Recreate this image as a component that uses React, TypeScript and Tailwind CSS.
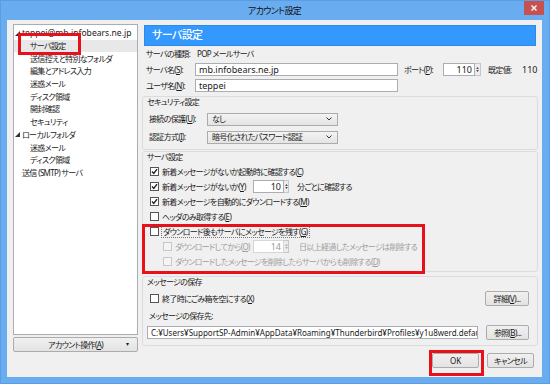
import React from "react";

const base = "font-['Noto_Sans','Noto_Sans_CJK_JP',sans-serif] [font-feature-settings:'palt'] text-[8px] tracking-[-0.65px] whitespace-nowrap text-[#1a1a1a]";
const latin = "text-[9px] tracking-normal";

function Check({ checked = false, disabled = false }: { checked?: boolean; disabled?: boolean }) {
    return <span className={`w-[9px] h-[9px] shrink-0 border flex items-center justify-center ${disabled ? "border-[#c8c8c8] bg-[#f4f4f4]" : "border-[#555] bg-white"}`}>
        {checked && <svg width="7" height="7" viewBox="0 0 7 7">
            <polyline points="1,3.6 2.8,5.5 6,1.2" fill="none" stroke="#222" strokeWidth="1.4" />
        </svg>}
    </span>;
}

function Spin({ value, disabled = false, wide = false }: { value: string; disabled?: boolean; wide?: boolean }) {
    return <div className="flex items-center h-[13px] shrink-0">
        <div className={`${wide ? "w-[32px]" : "w-[31px]"} h-full border bg-white text-right pr-[2px] leading-[11px] ${latin} ${disabled ? "border-[#d6d6d6] text-[#9a9a9a]" : "border-[#abadb3]"}`}>{value}</div>
        <div className={`${wide ? "w-[6px]" : "w-[5px]"} h-full flex flex-col items-center justify-center gap-[1px] border border-l-0 border-[#c6c6c6] bg-[#ececec]`}>
            <svg width="3" height="2" viewBox="0 0 4 3"><polygon points="0,3 2,0 4,3" fill={disabled ? "#aaa" : "#444"} /></svg>
            <svg width="3" height="2" viewBox="0 0 4 3"><polygon points="0,0 4,0 2,3" fill={disabled ? "#aaa" : "#444"} /></svg>
        </div>
    </div>;
}

function Select({ text }: { text: string }) {
    return <div className="w-[131px] h-[13px] border border-[#acacac] bg-gradient-to-b from-[#f3f3f3] to-[#e4e4e4] flex items-center justify-between pl-[4px] pr-[5px]">
        <span>{text}</span>
        <svg width="6" height="4" viewBox="0 0 6 4"><polyline points="0.5,0.5 3,3 5.5,0.5" fill="none" stroke="#333" strokeWidth="1" /></svg>
    </div>;
}

function Button({ children, className = "" }: { children: React.ReactNode; className?: string }) {
    return <div className={`h-[15px] border border-[#acacac] rounded-[2px] bg-gradient-to-b from-[#f0f0f0] to-[#e3e3e3] flex items-center justify-center ${className}`}>{children}</div>;
}

function Group({ title, children, className = "" }: { title: string; children: React.ReactNode; className?: string }) {
    return <div className={`border border-[#dcdcdc] rounded-[3px] ${className}`}>
        <div className="h-[10px] leading-[10px] pl-[4px]">{title}</div>
        {children}
    </div>;
}

const tree: { label: string; indent: number; arrow?: boolean; selected?: boolean }[] = [
    { label: "teppei@mb.infobears.ne.jp", indent: 0, arrow: true },
    { label: "サーバ設定", indent: 1, selected: true },
    { label: "送信控えと特別なフォルダ", indent: 1 },
    { label: "編集とアドレス入力", indent: 1 },
    { label: "迷惑メール", indent: 1 },
    { label: "ディスク領域", indent: 1 },
    { label: "開封確認", indent: 1 },
    { label: "セキュリティ", indent: 1 },
    { label: "ローカルフォルダ", indent: 0, arrow: true },
    { label: "迷惑メール", indent: 1 },
    { label: "ディスク領域", indent: 1 },
    { label: "送信 (SMTP) サーバ", indent: 2 },
];

export default function App() {
    return <div className={`relative w-[550px] h-[384px] bg-[#6aacf0] border border-[#5b9de2] flex flex-col pl-[6px] pr-[7px] pb-[6px] ${base}`}>
        {/* title bar */}
        <div className="h-[19px] flex items-center justify-center text-[9px] text-[#111]">アカウント設定</div>
        <div className="absolute right-[5px] top-0 w-[20px] h-[14px] bg-[#c75050] flex items-center justify-center">
            <svg width="6" height="6" viewBox="0 0 6 6"><path d="M0.5 0.5 L5.5 5.5 M5.5 0.5 L0.5 5.5" stroke="#fff" strokeWidth="1.4" /></svg>
        </div>

        {/* client */}
        <div className="flex-1 bg-[#f0f0f0] flex">
            {/* left column */}
            <div className="ml-[6px] pt-[4px] w-[125px] flex flex-col">
                <div className="h-[311px] border border-[#abadb3] bg-white pt-[2px] overflow-hidden">
                    {tree.map((t, i) =>
                        <div key={i} className={`h-[12.7px] flex items-center ${t.selected ? "bg-[#e8e8e8]" : ""} ${t.indent === 1 ? "pl-[16px]" : t.indent === 2 ? "pl-[8px]" : "pl-[1px]"}`}>
                            {t.arrow && <svg className="mr-[2px] shrink-0" width="5" height="5" viewBox="0 0 5 5"><polygon points="5,0 5,5 0,5" fill="#333" /></svg>}
                            <span className={i === 0 ? "text-[8.6px] tracking-normal" : ""}>{t.label}</span>
                        </div>
                    )}
                </div>
                <Button className="mt-[2px] relative">
                    <span>アカウント操作(<u>A</u>)</span>
                    <span className="absolute right-[9px] text-[6px]">▾</span>
                </Button>
            </div>

            {/* right column */}
            <div className="ml-[4px] w-[396px] pt-[5px] flex flex-col">
                <div className="mx-[2px] h-[21px] bg-[#3399ff] border border-[#2d8ae8] text-white text-[11px] tracking-[-0.6px] font-medium flex items-center pl-[7px]">サーバ設定</div>

                <div className="h-[15px] pl-[4px] flex items-center">
                    <span className="w-[51px]">サーバの種類:</span>
                    <span>POP メールサーバ</span>
                </div>
                <div className="mt-[1px] h-[15px] pl-[4px] flex items-center">
                    <span className="w-[49px]">サーバ名(<u>S</u>):</span>
                    <div className={`w-[203px] h-[13px] border border-[#abadb3] bg-white pl-[3px] leading-[11px] ${latin}`}>mb.infobears.ne.jp</div>
                    <span className="ml-[6px] w-[39px]">ポート(<u>P</u>):</span>
                    <Spin value="110" wide />
                    <span className="ml-[7px] w-[34px]">既定値:</span>
                    <span className={latin}>110</span>
                </div>
                <div className="mt-[1px] h-[15px] pl-[4px] flex items-center">
                    <span className="w-[49px]">ユーザ名(<u>N</u>):</span>
                    <div className={`w-[203px] h-[13px] border border-[#abadb3] bg-white pl-[3px] leading-[11px] ${latin}`}>teppei</div>
                </div>

                <Group title="セキュリティ設定" className="mt-[3px] pb-[4px]">
                    <div className="mt-[4px] h-[16px] pl-[6px] flex items-center">
                        <span className="w-[58px]">接続の保護(<u>U</u>):</span>
                        <Select text="なし" />
                    </div>
                    <div className="mt-[2px] h-[16px] pl-[6px] flex items-center">
                        <span className="w-[58px]">認証方式(<u>I</u>):</span>
                        <Select text="暗号化されたパスワード認証" />
                    </div>
                </Group>

                <Group title="サーバ設定" className="mt-[1px] pb-[2px]">
                    <div className="mt-[2px] h-[15px] pl-[7px] flex items-center gap-[3px]">
                        <Check checked /><span>新着メッセージがないか起動時に確認する(<u>C</u>)</span>
                    </div>
                    <div className="h-[15px] pl-[7px] flex items-center">
                        <Check checked /><span className="ml-[3px] w-[91px]">新着メッセージがないか(<u>Y</u>)</span>
                        <Spin value="10" />
                        <span className="ml-[8px]">分ごとに確認する</span>
                    </div>
                    <div className="h-[15px] pl-[7px] flex items-center gap-[3px]">
                        <Check checked /><span>新着メッセージを自動的にダウンロードする(<u>M</u>)</span>
                    </div>
                    <div className="h-[15px] pl-[7px] flex items-center gap-[3px]">
                        <Check /><span>ヘッダのみ取得する(<u>E</u>)</span>
                    </div>
                    <div className="h-[15px] pl-[7px] flex items-center gap-[2px]">
                        <Check /><span className="border border-dotted border-[#777] px-[1px] leading-[10px]">ダウンロード後もサーバにメッセージを残す(<u>G</u>)</span>
                    </div>
                    <div className="h-[15px] pl-[20px] flex items-center text-[#9d9d9d]">
                        <Check disabled /><span className="ml-[3px] w-[78px]">ダウンロードしてから(<u>O</u>)</span>
                        <Spin value="14" disabled />
                        <span className="ml-[10px]">日以上経過したメッセージは削除する</span>
                    </div>
                    <div className="h-[15px] pl-[20px] flex items-center gap-[3px] text-[#9d9d9d]">
                        <Check disabled /><span>ダウンロードしたメッセージを削除したらサーバからも削除する(<u>D</u>)</span>
                    </div>
                </Group>

                <Group title="メッセージの保存" className="mt-[4px] pb-[5px]">
                    <div className="mt-[3px] h-[17px] pl-[7px] pr-[8px] flex items-center">
                        <Check /><span className="ml-[3px]">終了時にごみ箱を空にする(<u>X</u>)</span>
                        <Button className="ml-auto w-[44px]"><span>詳細(<u>V</u>)...</span></Button>
                    </div>
                    <div className="mt-[4px] h-[10px] leading-[10px] pl-[6px]">メッセージの保存先:</div>
                    <div className="mt-[4px] h-[15px] pl-[4px] pr-[8px] flex items-center">
                        <div className="w-[331px] h-[13px] border border-[#abadb3] bg-white pl-[3px] leading-[11px] text-[8px] tracking-normal overflow-hidden">C:¥Users¥SupportSP-Admin¥AppData¥Roaming¥Thunderbird¥Profiles¥y1u8werd.default</div>
                        <Button className="ml-auto w-[43px]"><span>参照(<u>B</u>)...</span></Button>
                    </div>
                </Group>

                <div className="mt-[7px] flex justify-end gap-[8px] pr-[4px]">
                    <Button className="w-[47px] border-[#3c8fe0] tracking-normal">OK</Button>
                    <Button className="w-[47px]">キャンセル</Button>
                </div>
            </div>
        </div>

        {/* annotation boxes */}
        <div className="absolute left-[17px] top-[32px] w-[63px] h-[22px] border-[3px] border-[#e8101a]" />
        <div className="absolute left-[141px] top-[223px] w-[283px] h-[50px] border-[3px] border-[#e8101a]" />
        <div className="absolute left-[428px] top-[349px] w-[55px] h-[26px] border-[3px] border-[#e8101a]" />
    </div>;
}
